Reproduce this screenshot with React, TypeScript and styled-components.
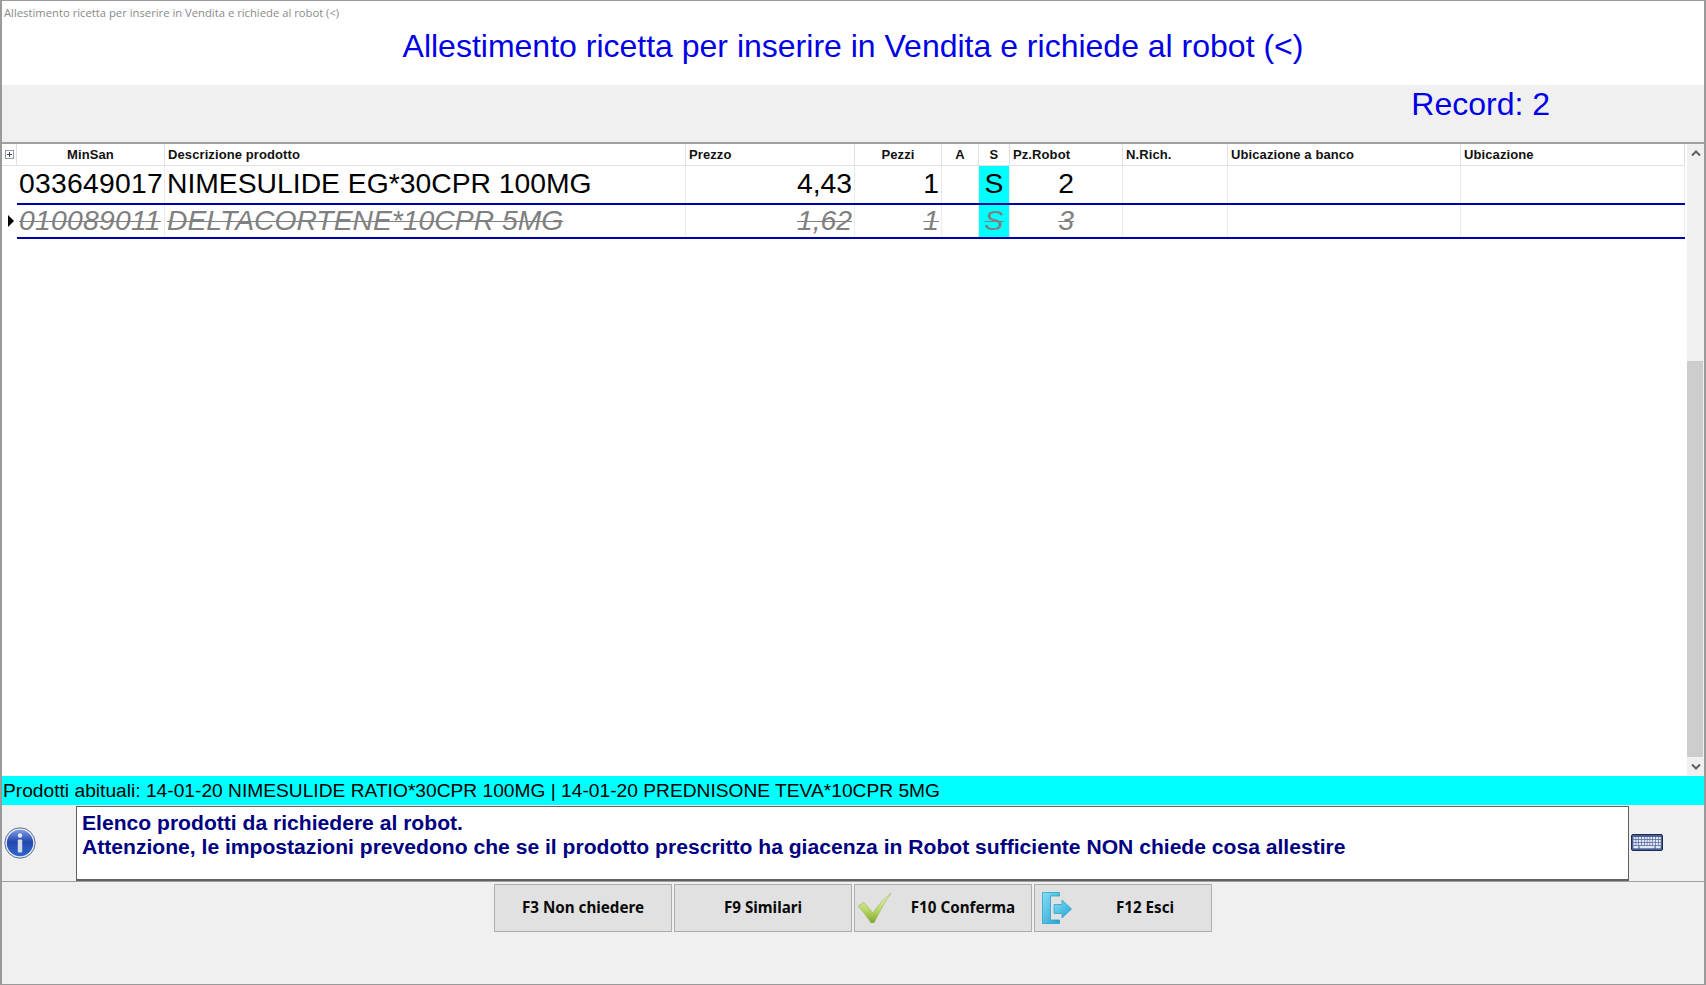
import React from "react";
import styled, { createGlobalStyle } from "styled-components";

const Global = createGlobalStyle`
  html, body { margin: 0; padding: 0; background: #fff; overflow: hidden; }
  * { box-sizing: border-box; }
`;

const Window = styled.div`
  width: 1706px;
  height: 985px;
  display: flex;
  flex-direction: column;
  background: #f0f0f0;
  border: 1px solid #9a9a9a;
  border-left-width: 2px;
  border-right-width: 2px;
  font-family: "Liberation Sans", Arial, sans-serif;
`;

const TitleArea = styled.header`
  height: 84px;
  background: #fff;
  display: flex;
  flex-direction: column;
`;

const Caption = styled.div`
  height: 24px;
  padding: 4px 0 0 2px;
  font: 11.25px/16px "Open Sans", sans-serif;
  color: #8a8a8a;
  white-space: nowrap;
`;

const Title = styled.h1`
  margin: 0;
  text-align: center;
  font-weight: 400;
  font-size: 32px;
  line-height: 42px;
  color: #0000e6;
`;

const RecordBand = styled.div`
  height: 57px;
  background: #f0f0f0;
  display: flex;
  justify-content: flex-end;
  padding: 0 154px 0 0;
  font-size: 32px;
  line-height: 38px;
  color: #0000e6;
`;

const GridFrame = styled.div`
  flex: 1;
  min-height: 0;
  background: #fff;
  border-top: 2px solid #a0a0a0;
  display: flex;
`;

const GridBody = styled.div`
  flex: 1;
  min-width: 0;
`;

const columns = "15px 148px 521px 169px 87px 37px 31px 113px 105px 233px 224px";

const GridRow = styled.div<{ $h: number }>`
  display: grid;
  grid-template-columns: ${columns};
  height: ${(p) => p.$h}px;
`;

const HeaderCell = styled.div<{ $align?: string }>`
  border-right: 1px solid #e0e0e0;
  border-bottom: 1px solid #e0e0e0;
  font-size: 13px;
  font-weight: 700;
  line-height: 21px;
  letter-spacing: 0.1px;
  padding: 0 3px;
  color: #111;
  text-align: ${(p) => p.$align || "left"};
  white-space: nowrap;
`;

const Expander = styled.div`
  border-bottom: 1px solid #e0e0e0;
  border-right: 1px solid #e0e0e0;
  display: flex;
  padding: 6px 0 0 3px;
`;

const Indicator = styled.div`
  display: flex;
  align-items: center;
  padding-left: 6px;
`;

const Cell = styled.div<{ $align?: string; $muted?: boolean; $flag?: boolean }>`
  border-right: 1px solid #ebebeb;
  font-size: 28.3px;
  font-style: ${(p) => (p.$muted ? "italic" : "normal")};
  color: ${(p) => (p.$muted ? "#808080" : "#000")};
  text-decoration: ${(p) => (p.$muted ? "line-through" : "none")};
  text-decoration-thickness: 1px;
  background: ${(p) => (p.$flag ? "#00ffff" : "transparent")};
  text-align: ${(p) => p.$align || "left"};
  padding: 0 2px;
  white-space: nowrap;
  overflow: hidden;
`;

const CodeCell = styled(Cell)`
  letter-spacing: 0.25px;
`;

const DataRow = styled(GridRow)<{ $lh: number }>`
  ${Cell} { line-height: ${(p) => p.$lh}px; }
`;

const RowRule = styled.div`
  height: 2px;
  margin-left: 15px;
  background: #0000a8;
`;

const Scrollbar = styled.div`
  width: 17px;
  flex: none;
  margin-left: 2px;
  background: #f0f0f0;
  display: flex;
  flex-direction: column;
`;

const ScrollArrow = styled.div`
  height: 19px;
  flex: none;
  display: flex;
  align-items: center;
  justify-content: center;
`;

const ScrollTrack = styled.div`
  flex: 1;
  padding: 198px 1px 0 0;
  display: flex;
`;

const ScrollThumb = styled.div`
  flex: 1;
  background: #cdcdcd;
`;

const HabitBar = styled.div`
  height: 29px;
  flex: none;
  background: #00ffff;
  font-size: 19.2px;
  line-height: 29px;
  padding-left: 1px;
  color: #000;
  white-space: nowrap;
`;

const InfoRow = styled.div`
  height: 77px;
  flex: none;
  display: flex;
  border-bottom: 1px solid #a0a0a0;
  background: #f0f0f0;
`;

const InfoIconBox = styled.div`
  width: 74px;
  flex: none;
  display: flex;
  align-items: center;
  padding: 0 0 1px 2px;
`;

const MessageBox = styled.div`
  width: 1553px;
  flex: none;
  border: 1px solid #606060;
  border-bottom-width: 2px;
  background: #fff;
  margin-top: 1px;
  padding: 4px 5px;
  color: #000080;
  font-size: 21.1px;
  font-weight: 700;
  line-height: 24px;
  white-space: nowrap;
`;

const KeyboardBox = styled.div`
  flex: 1;
  display: flex;
  align-items: center;
  padding: 0 0 1px 2px;
`;

const Footer = styled.footer`
  flex: none;
  height: 102px;
  display: flex;
  justify-content: center;
  align-items: flex-start;
  gap: 2px;
  padding: 2px 0 0 0;
  background: #f0f0f0;
`;

const FnButton = styled.button`
  position: relative;
  width: 178px;
  height: 48px;
  padding: 0 0 2px;
  background: #e1e1e1;
  border: 1px solid #adadad;
  font-family: "Noto Sans", sans-serif;
  font-size: 15.2px;
  font-weight: 700;
  line-height: 20px;
  color: #0a0a0a;
  display: flex;
  align-items: center;
  justify-content: center;
`;

const ButtonIcon = styled.span<{ $left: number; $top: number }>`
  position: absolute;
  left: ${(p) => p.$left}px;
  top: ${(p) => p.$top}px;
  display: flex;
`;

const ButtonLabel = styled.span<{ $shift?: number }>`
  margin-left: ${(p) => p.$shift || 0}px;
`;

const Plus = () => (
  <svg width="9" height="9" viewBox="0 0 9 9">
    <rect x=".5" y=".5" width="8" height="8" fill="#fff" stroke="#8a9aa8" />
    <path d="M2 4.500h5M4.500 2v5" stroke="#444" />
  </svg>
);

const Tri = () => (
  <svg width="6" height="12" viewBox="0 0 6 12">
    <path d="M0 0l6 6-6 6z" fill="#000" />
  </svg>
);

const Chevron = ({ down }: { down?: boolean }) => (
  <svg width="10" height="7" viewBox="0 0 10 7">
    <path d={down ? "M1 1.500l4 4 4-4" : "M1 5.500l4-4 4 4"} fill="none" stroke="#606060" strokeWidth="2" />
  </svg>
);

const InfoIcon = () => (
  <svg width="32" height="32" viewBox="0 0 32 32">
    <defs>
      <linearGradient id="ib" x1="0" y1="0" x2="0" y2="1">
        <stop offset="0" stopColor="#7f9ce6" />
        <stop offset=".45" stopColor="#2447ad" />
        <stop offset="1" stopColor="#2f66cf" />
      </linearGradient>
    </defs>
    <circle cx="16" cy="16" r="15.200" fill="#e3e8f2" stroke="#5c6f9a" />
    <circle cx="16" cy="16" r="13.200" fill="url(#ib)" />
    <circle cx="16" cy="8.500" r="2.200" fill="#e6ebf5" />
    <rect x="13.800" y="12.500" width="4.400" height="13" rx="1" fill="#d5dbe6" />
  </svg>
);

const KeyboardIcon = () => {
  const keys: React.ReactNode[] = [];
  [3, 6, 9].forEach((y, r) => {
    for (let i = 0; i < 10; i++) {
      keys.push(<rect key={`${r}-${i}`} x={2.400 + i * 2.800} y={y} width="2.200" height="2.300" fill="#dfe7f6" />);
    }
  });
  return (
    <svg width="32" height="17" viewBox="0 0 32 17">
      <rect x=".5" y=".5" width="31" height="16" rx="1.500" fill="#4a5f92" stroke="#1e2c55" />
      {keys}
      <rect x="2.400" y="12" width="5" height="2.300" fill="#dfe7f6" />
      <rect x="8.500" y="12" width="15" height="2.300" fill="#dfe7f6" />
      <rect x="24.600" y="12" width="5" height="2.300" fill="#dfe7f6" />
    </svg>
  );
};

const CheckIcon = () => (
  <svg width="33" height="30" viewBox="0 0 33 30">
    <defs>
      <linearGradient id="cg" x1="0" y1="0" x2="0" y2="1">
        <stop offset="0" stopColor="#eef6c8" />
        <stop offset=".6" stopColor="#b5d561" />
        <stop offset="1" stopColor="#7ea52a" />
      </linearGradient>
    </defs>
    <path
      d="M0 13 6 9.500l9 10.500C20 12 26 6 33 0c-6 9-12 19-17 30h-3C9 24 5 18 0 13z"
      fill="url(#cg)"
      stroke="#94b552"
      strokeWidth=".6"
    />
  </svg>
);

const ExitIcon = () => (
  <svg width="30" height="32" viewBox="0 0 30 32">
    <defs>
      <linearGradient id="eg" x1="0" y1="0" x2="1" y2="1">
        <stop offset="0" stopColor="#86def2" />
        <stop offset="1" stopColor="#22a2d6" />
      </linearGradient>
    </defs>
    <path d="M.5.5h17v3.500H8.500v24h9v3.500H.5z" fill="url(#eg)" stroke="#1d9bc6" strokeWidth=".7" />
    <path d="M12 12.500h8V8l9.500 9-9.500 9v-4.500h-8z" fill="url(#eg)" stroke="#1d9bc6" strokeWidth=".7" />
  </svg>
);

const headers: [string, string?][] = [
  ["MinSan", "center"],
  ["Descrizione prodotto"],
  ["Prezzo"],
  ["Pezzi", "center"],
  ["A", "center"],
  ["S", "center"],
  ["Pz.Robot"],
  ["N.Rich."],
  ["Ubicazione a banco"],
  ["Ubicazione"],
];

const rows = [
  { code: "033649017", name: "NIMESULIDE EG*30CPR 100MG", price: "4,43", qty: "1", robot: "2", muted: false, h: 37, lh: 34 },
  { code: "010089011", name: "DELTACORTENE*10CPR 5MG", price: "1,62", qty: "1", robot: "3", muted: true, h: 32, lh: 30 },
];

export default function App() {
  return (
    <Window>
      <Global />
      <TitleArea>
        <Caption>Allestimento ricetta per inserire in Vendita e richiede al robot (&lt;)</Caption>
        <Title>Allestimento ricetta per inserire in Vendita e richiede al robot (&lt;)</Title>
      </TitleArea>
      <RecordBand>Record: 2</RecordBand>
      <GridFrame>
        <GridBody>
          <GridRow $h={22}>
            <Expander><Plus /></Expander>
            {headers.map(([t, a]) => (
              <HeaderCell key={t} $align={a}>{t}</HeaderCell>
            ))}
          </GridRow>
          {rows.map((r) => (
            <React.Fragment key={r.code}>
              <DataRow $h={r.h} $lh={r.lh}>
                <Indicator>{r.muted && <Tri />}</Indicator>
                <CodeCell $muted={r.muted}>{r.code}</CodeCell>
                <Cell $muted={r.muted}>{r.name}</Cell>
                <Cell $muted={r.muted} $align="right">{r.price}</Cell>
                <Cell $muted={r.muted} $align="right">{r.qty}</Cell>
                <Cell />
                <Cell $muted={r.muted} $flag $align="center">S</Cell>
                <Cell $muted={r.muted} $align="center">{r.robot}</Cell>
                <Cell />
                <Cell />
                <Cell />
              </DataRow>
              <RowRule />
            </React.Fragment>
          ))}
        </GridBody>
        <Scrollbar>
          <ScrollArrow><Chevron /></ScrollArrow>
          <ScrollTrack><ScrollThumb /></ScrollTrack>
          <ScrollArrow><Chevron down /></ScrollArrow>
        </Scrollbar>
      </GridFrame>
      <HabitBar>Prodotti abituali: 14-01-20 NIMESULIDE RATIO*30CPR 100MG | 14-01-20 PREDNISONE TEVA*10CPR 5MG</HabitBar>
      <InfoRow>
        <InfoIconBox><InfoIcon /></InfoIconBox>
        <MessageBox>
          Elenco prodotti da richiedere al robot.
          <br />
          Attenzione, le impostazioni prevedono che se il prodotto prescritto ha giacenza in Robot sufficiente NON chiede cosa allestire
        </MessageBox>
        <KeyboardBox><KeyboardIcon /></KeyboardBox>
      </InfoRow>
      <Footer>
        <FnButton>F3 Non chiedere</FnButton>
        <FnButton>F9 Similari</FnButton>
        <FnButton>
          <ButtonIcon $left={3} $top={8}><CheckIcon /></ButtonIcon>
          <ButtonLabel $shift={40}>F10 Conferma</ButtonLabel>
        </FnButton>
        <FnButton>
          <ButtonIcon $left={7} $top={7}><ExitIcon /></ButtonIcon>
          <ButtonLabel $shift={44}>F12 Esci</ButtonLabel>
        </FnButton>
      </Footer>
    </Window>
  );
}
